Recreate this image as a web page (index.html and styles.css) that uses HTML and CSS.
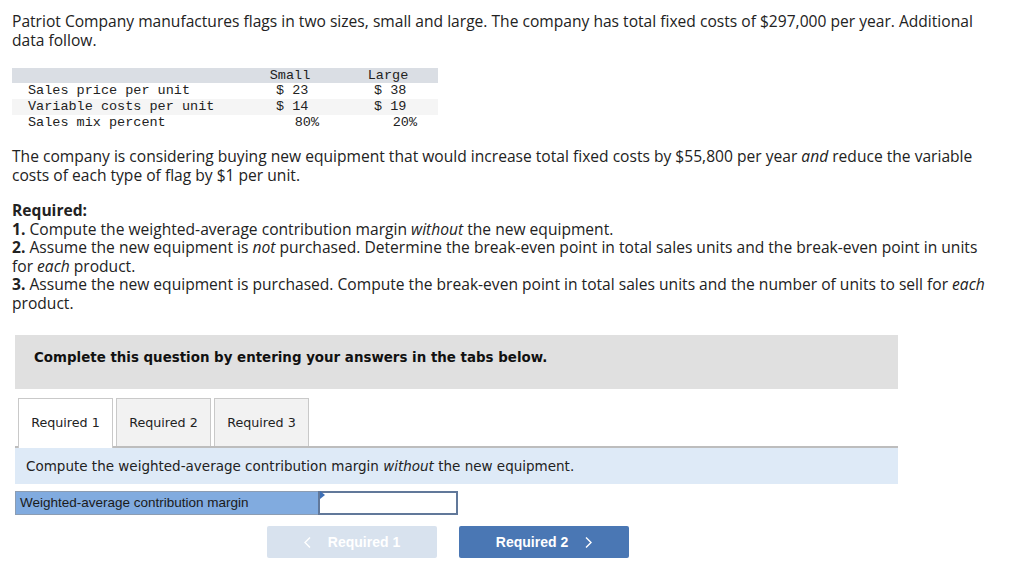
FILE: index.html
```html
<!DOCTYPE html>
<html>
<head>
<meta charset="utf-8">
<link rel="stylesheet" href="styles.css">
</head>
<body>
<div class="page">
  <p class="intro">Patriot Company manufactures flags in two sizes, small and large. The company has total fixed costs of $297,000 per year. Additional data follow.</p>

  <div class="data">
    <div class="row head"><span class="c2 ctr">Small</span><span class="c4 ctr">Large</span></div>
    <div class="row"><span class="lbl">Sales price per unit</span><span class="c2 dl">$ 23</span><span class="c4 dl">$ 38</span></div>
    <div class="row alt"><span class="lbl">Variable costs per unit</span><span class="c2 dl">$ 14</span><span class="c4 dl">$ 19</span></div>
    <div class="row"><span class="lbl">Sales mix percent</span><span class="c2 rt">80%</span><span class="c4 rt">20%</span></div>
  </div>

  <p class="para2">The company is considering buying new equipment that would increase total fixed costs by $55,800 per year <em>and</em> reduce the variable costs of each type of flag by $1 per unit.</p>

  <div class="req">
    <p><strong>Required:</strong></p>
    <p><strong>1.</strong> Compute the weighted-average contribution margin <em>without</em> the new equipment.</p>
    <p><strong>2.</strong> Assume the new equipment is <em>not</em> purchased. Determine the break-even point in total sales units and the break-even point in units for <em>each</em> product.</p>
    <p><strong>3.</strong> Assume the new equipment is purchased. Compute the break-even point in total sales units and the number of units to sell for <em>each</em> product.</p>
  </div>

  <div class="work">
    <div class="notice">Complete this question by entering your answers in the tabs below.</div>

    <div class="tabs">
      <div class="tab active">Required 1</div>
      <div class="tab">Required 2</div>
      <div class="tab">Required 3</div>
    </div>

    <div class="prompt">Compute the weighted-average contribution margin <em>without</em> the new equipment.</div>

    <div class="answer">
      <div class="alabel">Weighted-average contribution margin</div>
      <div class="ainput"><span class="flag"></span></div>
    </div>

    <div class="nav">
      <div class="btn prev"><svg class="chev" width="7" height="11" viewBox="0 0 7 11"><polyline points="6,0.5 1,5.5 6,10.5" fill="none" stroke="#ffffff" stroke-width="1.4"/></svg>Required 1</div>
      <div class="btn next">Required 2<svg class="chev" width="7" height="11" viewBox="0 0 7 11"><polyline points="1,0.5 6,5.5 1,10.5" fill="none" stroke="#ffffff" stroke-width="1.4"/></svg></div>
    </div>
  </div>
</div>
</body>
</html>
```

FILE: styles.css
```css
html, body {
  margin: 0;
  padding: 0;
  background: #ffffff;
}

.page {
  width: 990px;
  padding: 12px 0 0 12px;
  font-family: "Open Sans", "Lato", sans-serif;
  font-size: 15.6px;
  line-height: 18.5px;
  color: #222222;
}

p {
  margin: 0;
}

.intro {
  margin-bottom: 19px;
}

.data {
  width: 426px;
  font-family: "Liberation Mono", "DejaVu Sans Mono", monospace;
  font-size: 13.5px;
  line-height: 16px;
  color: #222222;
}

.row {
  display: grid;
  grid-template-columns: 246px 64px 34px 64px 18px;
  height: 16px;
}

.row.head {
  background: #dadee4;
  height: 15px;
  line-height: 15px;
}

.row.alt {
  background: #f5f5f5;
}

.lbl {
  grid-column: 1;
  padding-left: 16px;
  white-space: pre;
}

.c2 {
  grid-column: 2;
}

.c4 {
  grid-column: 4;
}

.ctr {
  text-align: center;
}

.dl {
  padding-left: 18px;
  white-space: pre;
}

.rt {
  text-align: right;
  padding-right: 3px;
}

.para2 {
  margin-top: 16px;
}

.req {
  margin-top: 17px;
}

.work {
  margin-left: 3px;
  width: 883px;
  margin-top: 23px;
  font-family: "DejaVu Sans", Verdana, sans-serif;
  font-size: 13px;
  color: #111111;
}

.notice {
  background: #e0e0e0;
  height: 54px;
  box-sizing: border-box;
  padding-left: 19px;
  padding-bottom: 8px;
  line-height: 46px;
  font-weight: bold;
  font-size: 13.4px;
}

.tabs {
  display: flex;
  gap: 3px;
  margin-top: 9px;
  padding-left: 3px;
  border-bottom: 2px solid #bdbdbd;
  height: 48px;
}

.tab {
  width: 95px;
  height: 48px;
  box-sizing: border-box;
  border: 1px solid #c9c9c9;
  border-bottom: none;
  background: #f2f2f2;
  text-align: center;
  line-height: 48px;
  font-size: 12.7px;
  color: #222222;
}

.tab.active {
  background: #ffffff;
  height: 50px;
  position: relative;
  z-index: 1;
}

.prompt {
  background: #deeaf7;
  height: 36px;
  line-height: 36px;
  padding-left: 11px;
  font-size: 13.5px;
  color: #222222;
}

.answer {
  display: flex;
  margin-top: 7px;
  height: 24px;
}

.alabel {
  width: 303px;
  box-sizing: border-box;
  background: #81abdf;
  border: 1px solid #8c9db3;
  border-right: none;
  font-family: "Liberation Sans", Arial, sans-serif;
  font-size: 13.5px;
  line-height: 22px;
  padding-left: 4px;
  color: #1a1a1a;
}

.ainput {
  width: 140px;
  box-sizing: border-box;
  background: #ffffff;
  border: 2px solid #61789a;
  position: relative;
}

.flag {
  position: absolute;
  left: 0;
  top: -2px;
  width: 0;
  height: 0;
  border-top: 4px solid transparent;
  border-bottom: 4px solid transparent;
  border-left: 5px solid #3d6fb6;
}

.nav {
  display: flex;
  gap: 22px;
  margin-top: 11px;
  margin-left: 252px;
}

.btn {
  width: 170px;
  height: 32px;
  border-radius: 2px;
  font-family: "Liberation Sans", Arial, sans-serif;
  font-weight: bold;
  font-size: 14px;
  line-height: 32px;
  color: #ffffff;
  display: flex;
  align-items: center;
  justify-content: center;
}

.btn.prev {
  background: #d8e2ee;
}

.btn.next {
  background: #4a77b4;
}

.prev .chev {
  margin-right: 17px;
}

.next .chev {
  margin-left: 17px;
}
```
